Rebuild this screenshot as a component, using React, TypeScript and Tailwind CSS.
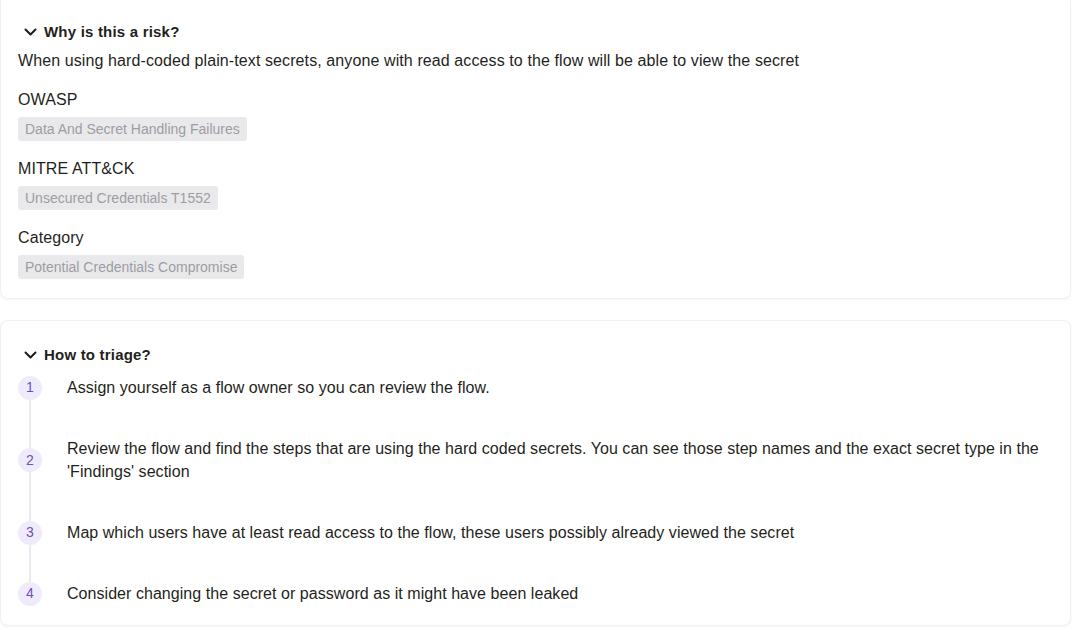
const RISK_TAGS = [
  { label: "OWASP", tag: "Data And Secret Handling Failures" },
  { label: "MITRE ATT&CK", tag: "Unsecured Credentials T1552" },
  { label: "Category", tag: "Potential Credentials Compromise" },
];

const TRIAGE_STEPS = [
  "Assign yourself as a flow owner so you can review the flow.",
  "Review the flow and find the steps that are using the hard coded secrets. You can see those step names and the exact secret type in the 'Findings' section",
  "Map which users have at least read access to the flow, these users possibly already viewed the secret",
  "Consider changing the secret or password as it might have been leaked",
];

function Chevron() {
  return (
    <svg width="13" height="8" viewBox="0 0 13 8" fill="none">
      <path d="M1.5 1.5 L6.5 6.5 L11.5 1.5" stroke="#1c1c1e" strokeWidth="2" strokeLinecap="round" strokeLinejoin="round" />
    </svg>
  );
}

function SectionHeader({ title }: { title: string }) {
  return (
    <div className="flex items-center gap-[7px] pl-[6px] h-[22px]">
      <Chevron />
      <span className="text-[15px] font-bold leading-[22px] tracking-[0.2px]">{title}</span>
    </div>
  );
}

export default function App() {
  return (
    <div className="min-h-screen bg-white font-['Liberation_Sans',Arial,sans-serif] text-[#1f1f21]">
      <div className="w-[1071px] flex flex-col gap-[21px]">
        {/* Why is this a risk */}
        <div className="rounded-b-lg border border-t-0 border-[#f1f1f2] shadow-[0_1px_3px_rgba(0,0,0,0.05)] bg-white pt-[21px] pb-[19px] px-[17px]">
          <SectionHeader title="Why is this a risk?" />
          <p className="mt-[7px] text-[16px] leading-[22px] tracking-[0.1px]">
            When using hard-coded plain-text secrets, anyone with read access to the flow will be able to view the secret
          </p>
          {RISK_TAGS.map((item) => (
            <div key={item.label} className="mt-[17px]">
              <div className="text-[16px] leading-[22px] tracking-[0.1px]">{item.label}</div>
              <span className="mt-[6px] inline-flex h-[24px] items-center rounded-[3px] bg-[#e9e9eb] px-[7px] text-[14px] text-[#9d9da2]">
                {item.tag}
              </span>
            </div>
          ))}
        </div>

        {/* How to triage */}
        <div className="rounded-lg border border-[#f1f1f2] shadow-[0_1px_3px_rgba(0,0,0,0.05)] bg-white pt-[23px] pb-[1px] pl-[17px] pr-[12px]">
          <SectionHeader title="How to triage?" />
          <div className="mt-[-9px] flex flex-col">
            {TRIAGE_STEPS.map((step, i) => (
              <div key={i} className="flex items-stretch gap-[25px]">
                <div className="flex w-[24px] flex-col items-center">
                  <div className={`w-[2px] flex-1 ${i === 0 ? "bg-transparent" : "bg-[#ebe9f0]"}`} />
                  <div className="flex h-[24px] w-[24px] items-center justify-center rounded-full bg-[#efebfa] text-[14px] text-[#6a50bf]">
                    {i + 1}
                  </div>
                  <div className={`w-[2px] flex-1 ${i === TRIAGE_STEPS.length - 1 ? "bg-transparent" : "bg-[#ebe9f0]"}`} />
                </div>
                <p className="flex-1 py-[19px] text-[16px] leading-[23px] tracking-[0.05px]">{step}</p>
              </div>
            ))}
          </div>
        </div>
      </div>
    </div>
  );
}
